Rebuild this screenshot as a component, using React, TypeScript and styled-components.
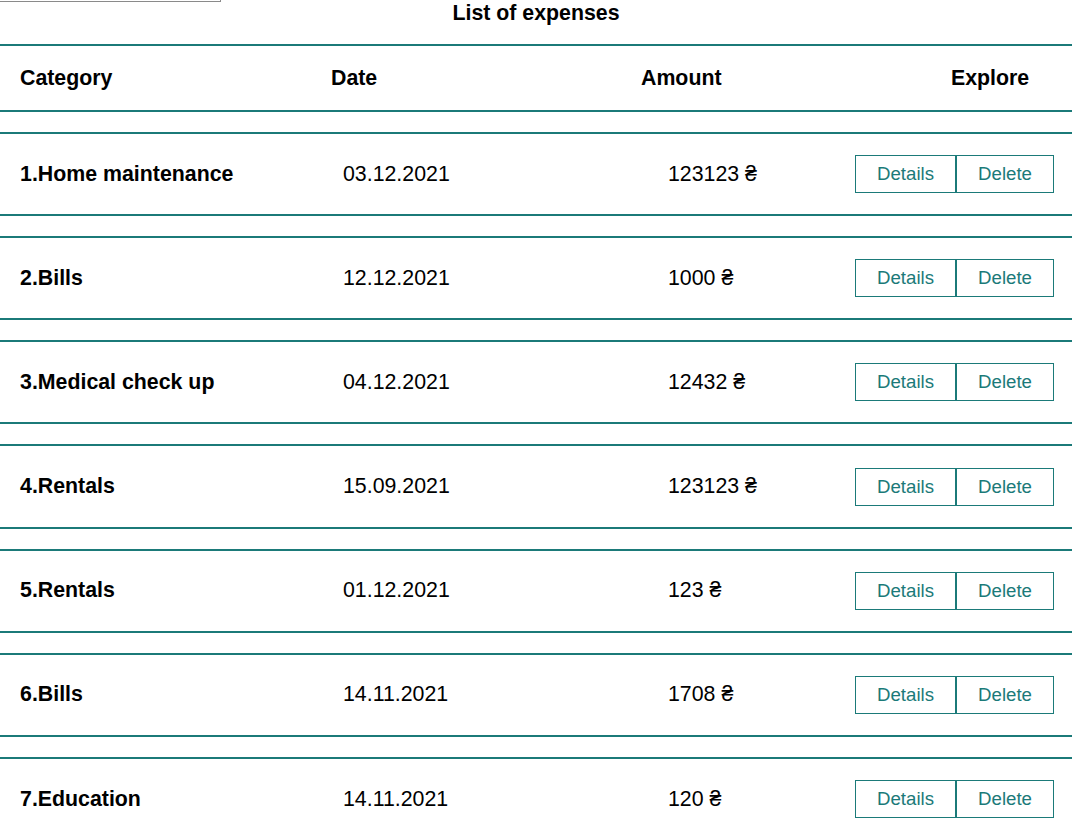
import React from "react";
import styled, { createGlobalStyle } from "styled-components";

const teal = "#1b7a79";

const GlobalStyle = createGlobalStyle`
  html { scrollbar-width: none; }
  html::-webkit-scrollbar { display: none; }
  body {
    margin: 0;
    background: #ffffff;
    font-family: "Liberation Sans", Arial, sans-serif;
    color: #000000;
  }
`;

const Page = styled.div`
  width: 1072px;
  display: flex;
  flex-direction: column;
  gap: 20px;
`;

const TopBar = styled.div`
  display: grid;
  height: 24px;
`;

const InputStub = styled.div`
  grid-area: 1 / 1;
  justify-self: start;
  align-self: start;
  width: 220px;
  height: 1px;
  border-bottom: 1px solid #8a8a8a;
  border-right: 1px solid #8a8a8a;
`;

const Title = styled.h1`
  grid-area: 1 / 1;
  margin: 0;
  padding-top: 1px;
  text-align: center;
  font-size: 21.33px;
  line-height: 24px;
  font-weight: 700;
`;

const Row = styled.div<{ $cols: string; $height: number }>`
  display: grid;
  grid-template-columns: ${(p) => p.$cols};
  align-items: center;
  box-sizing: border-box;
  height: ${(p) => p.$height}px;
  padding-left: 20px;
  border-top: 2px solid ${teal};
  border-bottom: 2px solid ${teal};
  font-size: 21.33px;
`;

const HeadCell = styled.div`
  font-weight: 700;
`;

const CategoryCell = styled.div`
  font-weight: 700;
`;

const Cell = styled.div`
  font-weight: 400;
`;

const Actions = styled.div`
  display: flex;
`;

const ActionButton = styled.button`
  height: 38px;
  padding: 0 21px;
  margin: 0;
  background: #ffffff;
  border: 1px solid ${teal};
  border-radius: 0;
  color: ${teal};
  font-family: "Liberation Sans", Arial, sans-serif;
  font-size: 18.67px;
  cursor: pointer;
`;

const expenses = [
  { category: "Home maintenance", date: "03.12.2021", amount: 123123 },
  { category: "Bills", date: "12.12.2021", amount: 1000 },
  { category: "Medical check up", date: "04.12.2021", amount: 12432 },
  { category: "Rentals", date: "15.09.2021", amount: 123123 },
  { category: "Rentals", date: "01.12.2021", amount: 123 },
  { category: "Bills", date: "14.11.2021", amount: 1708 },
  { category: "Education", date: "14.11.2021", amount: 120 },
];

export default function App() {
  return (
    <>
      <GlobalStyle />
      <Page>
        <TopBar>
          <InputStub />
          <Title>List of expenses</Title>
        </TopBar>
        <Row $cols="311px 310px 310px auto" $height={68}>
          <HeadCell>Category</HeadCell>
          <HeadCell>Date</HeadCell>
          <HeadCell>Amount</HeadCell>
          <HeadCell>Explore</HeadCell>
        </Row>
        {expenses.map((e, i) => (
          <Row key={i} $cols="323px 325px 187px auto" $height={84.17}>
            <CategoryCell>
              {i + 1}.{e.category}
            </CategoryCell>
            <Cell>{e.date}</Cell>
            <Cell>{e.amount} ₴</Cell>
            <Actions>
              <ActionButton>Details</ActionButton>
              <ActionButton>Delete</ActionButton>
            </Actions>
          </Row>
        ))}
      </Page>
    </>
  );
}
